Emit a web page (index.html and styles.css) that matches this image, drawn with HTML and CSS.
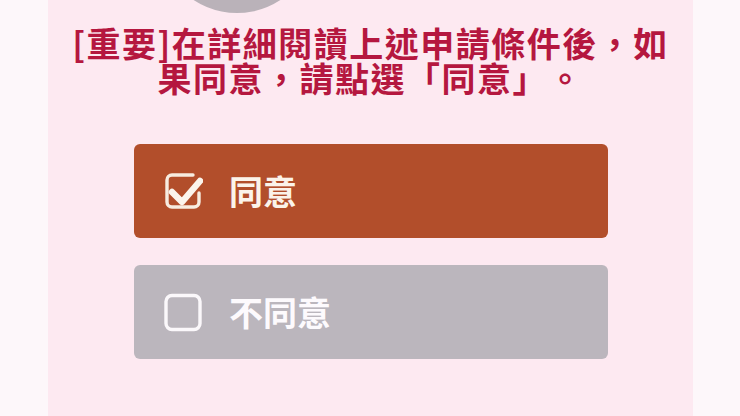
FILE: index.html
```html
<!DOCTYPE html>
<html lang="zh-Hant">
<head>
<meta charset="utf-8">
<link rel="stylesheet" href="styles.css">
</head>
<body>
<div class="page">
  <div class="panel">
    <div class="avatar"></div>
    <h1 class="notice">[重要]在詳細閱讀上述申請條件後，如<br>果同意，請點選「同意」。</h1>
    <div class="choices">
      <div class="choice agree">
        <svg class="box" viewBox="0 0 40 40" width="40" height="40">
          <path d="M30 4 H9 a5 5 0 0 0 -5 5 V31 a5 5 0 0 0 5 5 H31 a5 5 0 0 0 5 -5 V22" fill="none" stroke="#f7ece0" stroke-width="3.4" stroke-linecap="round"/>
          <path d="M9 21 L19 31 L37 10" fill="none" stroke="#fbf4ec" stroke-width="6.5" stroke-linecap="round" stroke-linejoin="round"/>
        </svg>
        <span class="label">同意</span>
      </div>
      <div class="choice disagree">
        <svg class="box" viewBox="0 0 40 40" width="40" height="40">
          <rect x="3" y="3.5" width="34" height="34" rx="6" fill="none" stroke="#fbf8fb" stroke-width="3.4"/>
        </svg>
        <span class="label">不同意</span>
      </div>
    </div>
  </div>
</div>
</body>
</html>
```
FILE: styles.css
```css
html, body {
  margin: 0;
  padding: 0;
  background: #fdf7fa;
}
body {
  width: 740px;
  height: 416px;
  overflow: hidden;
  font-family: "Noto Sans CJK TC", "Noto Sans", sans-serif;
}
.page {
  display: flex;
  height: 416px;
}
.panel {
  position: relative;
  margin-left: 48px;
  width: 645px;
  height: 416px;
  background: #fde9f1;
  padding-top: 25px;
  box-sizing: border-box;
  display: flex;
  flex-direction: column;
  align-items: center;
}
.avatar {
  position: absolute;
  left: 110px;
  top: -145px;
  width: 158px;
  height: 158px;
  border-radius: 50%;
  background: #bab2b9;
}
.notice {
  margin: 0;
  font-size: 34px;
  line-height: 35px;
  font-weight: 700;
  letter-spacing: 1.5px;
  color: #b5173f;
  text-align: center;
  white-space: nowrap;
  text-spacing-trim: space-all;
}
.choices {
  margin-top: 49px;
  display: flex;
  flex-direction: column;
  gap: 27px;
  margin-left: 1px;
}
.choice {
  width: 474px;
  height: 94px;
  border-radius: 6px;
  display: flex;
  align-items: center;
  padding-left: 29px;
  box-sizing: border-box;
  gap: 26px;
}
.agree {
  background: #b24e2b;
}
.disagree {
  background: #bbb6bd;
}
.box {
  display: block;
  flex: none;
}
.label {
  font-size: 34px;
  font-weight: 700;
  color: #fbf3ea;
  line-height: 40px;
}
.disagree .label {
  color: #fdfafd;
}
```
